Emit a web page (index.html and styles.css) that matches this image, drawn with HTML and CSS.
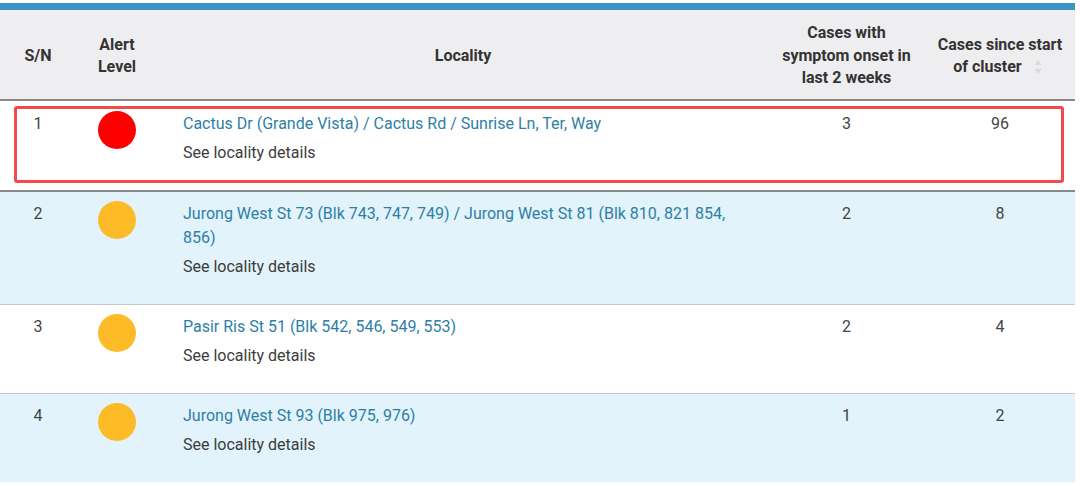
FILE: index.html
```html
<!DOCTYPE html>
<html>
<head>
<meta charset="utf-8">
<link rel="stylesheet" href="styles.css">
</head>
<body>
<div class="page">
  <div class="topbar"></div>
  <div class="table-wrap">
    <table class="clusters">
      <colgroup>
        <col class="c-sn"><col class="c-alert"><col class="c-loc"><col class="c-onset"><col class="c-total">
      </colgroup>
      <thead>
        <tr>
          <th>S/N</th>
          <th>Alert<br>Level</th>
          <th>Locality</th>
          <th>Cases with<br>symptom onset in<br>last 2 weeks</th>
          <th>Cases since start<br>of cluster<svg class="sort-icon" width="8" height="16" viewBox="0 0 8 16"><path d="M4 1 L7.5 6 L0.5 6 Z" fill="#dadada"/><path d="M4 15 L7.5 10 L0.5 10 Z" fill="#dadada"/></svg></th>
        </tr>
      </thead>
      <tbody>
        <tr class="row first">
          <td class="num">1</td>
          <td class="alert"><span class="dot red"></span></td>
          <td class="loc"><a class="loc-link">Cactus Dr (Grande Vista) / Cactus Rd / Sunrise Ln, Ter, Way</a><div class="details">See locality details</div></td>
          <td class="num">3</td>
          <td class="num">96</td>
        </tr>
        <tr class="row alt">
          <td class="num">2</td>
          <td class="alert"><span class="dot amber"></span></td>
          <td class="loc"><a class="loc-link">Jurong West St 73 (Blk 743, 747, 749) / Jurong West St 81 (Blk 810, 821 854, 856)</a><div class="details">See locality details</div></td>
          <td class="num">2</td>
          <td class="num">8</td>
        </tr>
        <tr class="row">
          <td class="num">3</td>
          <td class="alert"><span class="dot amber"></span></td>
          <td class="loc"><a class="loc-link">Pasir Ris St 51 (Blk 542, 546, 549, 553)</a><div class="details">See locality details</div></td>
          <td class="num">2</td>
          <td class="num">4</td>
        </tr>
        <tr class="row alt last">
          <td class="num">4</td>
          <td class="alert"><span class="dot amber"></span></td>
          <td class="loc"><a class="loc-link">Jurong West St 93 (Blk 975, 976)</a><div class="details">See locality details</div></td>
          <td class="num">1</td>
          <td class="num">2</td>
        </tr>
      </tbody>
    </table>
    <div class="highlight"></div>
  </div>
</div>
</body>
</html>
```

FILE: styles.css
```css
html, body {
  margin: 0;
  padding: 0;
  background: #ffffff;
}
body {
  font-family: Roboto, "Liberation Sans", sans-serif;
  color: #444;
}
.page {
  width: 1075px;
  padding-top: 3px;
}
.topbar {
  height: 7px;
  background: #3b95c3;
}
.table-wrap {
  position: relative;
}
.clusters {
  width: 1075px;
  border-collapse: collapse;
  table-layout: fixed;
}
.c-sn { width: 76px; }
.c-alert { width: 82px; }
.c-loc { width: 610px; }
.c-onset { width: 157px; }
.c-total { width: 150px; }

thead th {
  background: #eeeef0;
  height: 90px;
  padding: 3px 0 0;
  box-sizing: border-box;
  font-size: 16px;
  line-height: 22.5px;
  font-weight: 700;
  color: #333;
  text-align: center;
  vertical-align: middle;
  border-bottom: 2px solid #8a8a8a;
}
.sort-icon {
  display: inline-block;
  vertical-align: -3px;
  margin-left: 12px;
  margin-right: 5px;
}
tbody td {
  font-size: 16px;
  line-height: 24px;
  vertical-align: top;
  padding: 10px 0 25px;
  text-align: center;
  color: #444;
}
.row { background: #ffffff; border-bottom: 1px solid #c8c8c8; }
.row.alt { background: #e2f3fb; }
.row.first { border-bottom: 2px solid #8a8a8a; }
.row.first td { padding-top: 11px; padding-bottom: 25px; }
.row.last { border-bottom: none; }

td.loc {
  text-align: left;
  padding-left: 25px;
  padding-right: 30px;
}
.loc-link {
  color: #2d7fa6;
  text-decoration: none;
}
.details {
  margin-top: 5px;
  color: #3c3c3c;
}
.dot {
  display: inline-block;
  width: 38px;
  height: 38px;
  border-radius: 50%;
  vertical-align: top;
  margin-top: -1px;
}
.dot.red { background: #ff0000; }
.dot.amber { background: #fdbb27; }

.highlight {
  position: absolute;
  left: 14px;
  top: 96px;
  width: 1050px;
  height: 77px;
  box-sizing: border-box;
  border: 3px solid #f24a4c;
  border-radius: 3px;
  pointer-events: none;
}
```
